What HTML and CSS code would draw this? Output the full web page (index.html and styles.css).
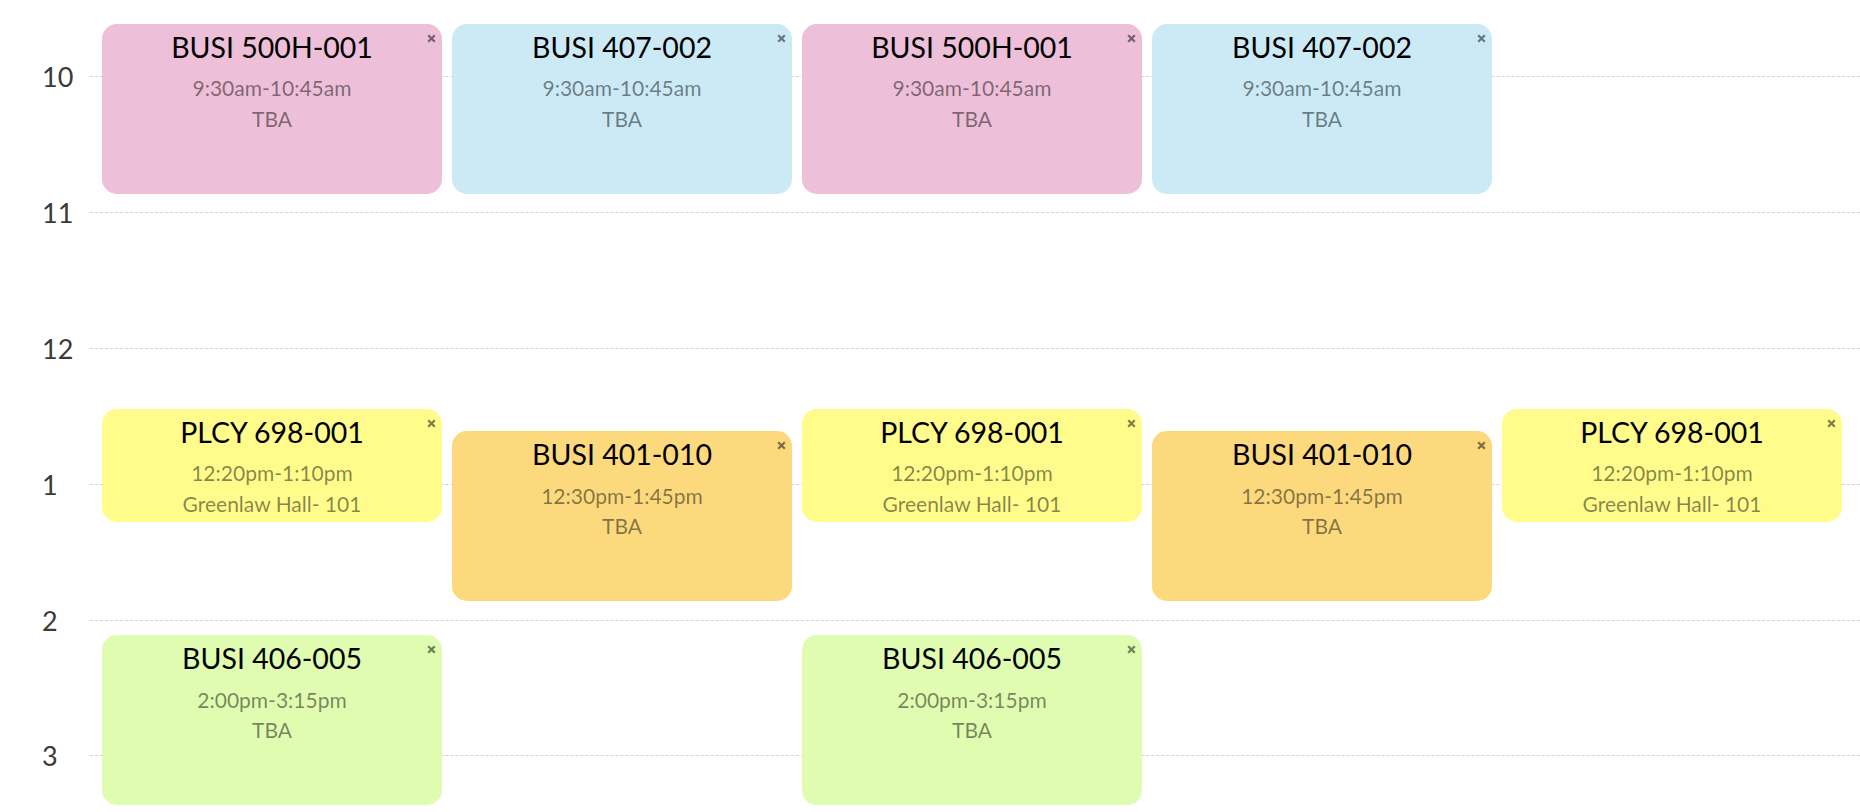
FILE: index.html
```html
<!DOCTYPE html>
<html lang="en">
<head>
    <meta charset="UTF-8">
    <meta name="viewport" content="width=device-width, initial-scale=1.0">
    <title>Weekly Schedule</title>
    <link rel="stylesheet" href="styles.css">
</head>
<body>
    <div class="schedule">
        <div class="hours">
            <div class="hour"><span class="hour-label">10</span><span class="hour-line"></span></div>
            <div class="hour"><span class="hour-label">11</span><span class="hour-line"></span></div>
            <div class="hour"><span class="hour-label">12</span><span class="hour-line"></span></div>
            <div class="hour"><span class="hour-label">1</span><span class="hour-line"></span></div>
            <div class="hour"><span class="hour-label">2</span><span class="hour-line"></span></div>
            <div class="hour"><span class="hour-label">3</span><span class="hour-line"></span></div>
        </div>
        <div class="days" id="days">
            <div class="day"></div>
            <div class="day"></div>
            <div class="day"></div>
            <div class="day"></div>
            <div class="day"></div>
        </div>
    </div>
    <script>
        document.addEventListener('DOMContentLoaded', function() {
            const HOUR_HEIGHT = 135.85;
            const FIRST_HOUR = 10 * 60;
            const OFFSET = 91.7; // where 10:00 sits inside the day column

            const courses = [
                { name: 'BUSI 500H-001', start: '9:30', end: '10:45', time: '9:30am-10:45am', place: 'TBA', color: 'pink', days: [0, 2] },
                { name: 'BUSI 407-002', start: '9:30', end: '10:45', time: '9:30am-10:45am', place: 'TBA', color: 'blue', days: [1, 3] },
                { name: 'PLCY 698-001', start: '12:20', end: '13:10', time: '12:20pm-1:10pm', place: 'Greenlaw Hall- 101', color: 'yellow', days: [0, 2, 4] },
                { name: 'BUSI 401-010', start: '12:30', end: '13:45', time: '12:30pm-1:45pm', place: 'TBA', color: 'orange', days: [1, 3] },
                { name: 'BUSI 406-005', start: '14:00', end: '15:15', time: '2:00pm-3:15pm', place: 'TBA', color: 'green', days: [0, 2] }
            ];

            function minutes(str) {
                const parts = str.split(':');
                return parseInt(parts[0]) * 60 + parseInt(parts[1]);
            }

            function toY(min) {
                return OFFSET + (min - FIRST_HOUR) * HOUR_HEIGHT / 60;
            }

            const dayColumns = document.querySelectorAll('.day');

            courses.forEach(course => {
                const top = toY(minutes(course.start));
                const height = toY(minutes(course.end)) - top;
                course.days.forEach(day => {
                    const card = document.createElement('div');
                    card.classList.add('event', course.color);
                    card.style.top = top + 'px';
                    card.style.height = height + 'px';
                    card.innerHTML = `
                        <button class="remove" type="button" aria-label="Remove">
                            <svg viewBox="0 0 9 9" width="9" height="9"><path d="M1.2 1.2L7.8 7.8M7.8 1.2L1.2 7.8"/></svg>
                        </button>
                        <div class="event-title">${course.name}</div>
                        <div class="event-info">${course.time}</div>
                        <div class="event-info">${course.place}</div>
                    `;
                    dayColumns[day].appendChild(card);
                });
            });
        });
    </script>
</body>
</html>
```

FILE: styles.css
```css
body {
    font-family: Lato, "Open Sans", sans-serif;
    margin: 0;
    padding: 0;
    background: #fff;
    color: #333;
    overflow: hidden;
}

.schedule {
    position: relative;
    height: 812px;
    overflow: hidden;
}

.hours {
    display: flex;
    flex-direction: column;
    gap: 105.85px;
    padding-top: 61.7px;
}

.hour {
    display: flex;
    align-items: center;
    height: 30px;
}

.hour-label {
    box-sizing: border-box;
    width: 90px;
    padding-left: 42px;
    font-size: 27px;
    color: #3a3a3a;
}

.hour-line {
    flex: 1;
    border-top: 1px dashed #d4d4d4;
}

/* day columns sit over the hour lines */
.days {
    position: absolute;
    top: 0;
    bottom: 0;
    left: 102px;
    display: grid;
    grid-template-columns: repeat(5, 340px);
    column-gap: 10px;
}

.day {
    position: relative;
}

.event {
    position: absolute;
    left: 0;
    right: 0;
    box-sizing: border-box;
    padding-top: 6px;
    border-radius: 15px;
    text-align: center;
    color: rgba(0, 0, 0, 0.48);
    overflow: hidden;
}

.event.pink {
    background-color: #edbfd8;
}

.event.blue {
    background-color: #cbeaf5;
}

.event.yellow {
    background-color: #fffc8b;
}

.event.orange {
    background-color: #fdd97e;
}

.event.green {
    background-color: #dffcb0;
}

.event-title {
    font-size: 28.5px;
    line-height: 35px;
    color: #000;
    margin-bottom: 8.5px;
}

.event-info {
    font-size: 21px;
    line-height: 30.6px;
}

.remove {
    position: absolute;
    top: 10px;
    right: 6px;
    width: 9px;
    height: 9px;
    padding: 0;
    border: none;
    background: none;
    cursor: pointer;
    line-height: 0;
}

.remove svg {
    display: block;
    stroke: rgba(0, 0, 0, 0.5);
    stroke-width: 2.2;
    fill: none;
}
```
